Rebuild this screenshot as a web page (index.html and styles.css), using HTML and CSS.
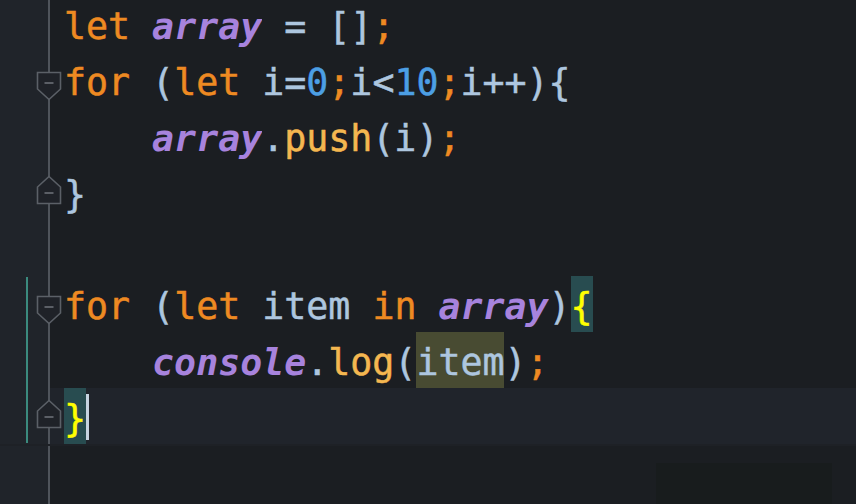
FILE: index.html
```html
<!DOCTYPE html>
<html>
<head>
<meta charset="utf-8">
<link rel="stylesheet" href="styles.css">
</head>
<body>
<div class="editor">
  <div class="lines">
    <div class="row">
      <div class="gutter"></div>
      <div class="code"><span class="kw">let</span> <span class="var">array</span> <span class="id">=</span> <span class="id">[]</span><span class="kw">;</span></div>
    </div>
    <div class="row">
      <div class="gutter"><svg class="fold" width="26" height="30" viewBox="0 0 26 30"><path d="M1.5 1.5H24.5V18L13 28.5L1.5 18Z"/><path class="minus" d="M8.5 12H17.5"/></svg></div>
      <div class="code"><span class="kw">for</span> <span class="id">(</span><span class="kw">let</span> <span class="id">i=</span><span class="num">0</span><span class="kw">;</span><span class="id">i&lt;</span><span class="num">10</span><span class="kw">;</span><span class="id">i++){</span></div>
    </div>
    <div class="row">
      <div class="gutter"></div>
      <div class="code">    <span class="var">array</span><span class="id">.</span><span class="fn">push</span><span class="id">(i)</span><span class="kw">;</span></div>
    </div>
    <div class="row">
      <div class="gutter"><svg class="fold up" width="26" height="30" viewBox="0 0 26 30"><path d="M1.5 28.5H24.5V12L13 1.5L1.5 12Z"/><path class="minus" d="M8.5 18H17.5"/></svg></div>
      <div class="code"><span class="id">}</span></div>
    </div>
    <div class="row">
      <div class="gutter"></div>
      <div class="code"></div>
    </div>
    <div class="row">
      <div class="gutter changed first"><svg class="fold" width="26" height="30" viewBox="0 0 26 30"><path d="M1.5 1.5H24.5V18L13 28.5L1.5 18Z"/><path class="minus" d="M8.5 12H17.5"/></svg></div>
      <div class="code"><span class="kw">for</span> <span class="id">(</span><span class="kw">let</span> <span class="id">item</span> <span class="kw">in</span> <span class="var">array</span><span class="id">)</span><span class="match">{</span></div>
    </div>
    <div class="row">
      <div class="gutter changed"></div>
      <div class="code">    <span class="var">console</span><span class="id">.</span><span class="fn">log</span><span class="id">(</span><span class="id occ">item</span><span class="id">)</span><span class="kw">;</span></div>
    </div>
    <div class="row current">
      <div class="gutter changed last"><svg class="fold up" width="26" height="30" viewBox="0 0 26 30"><path d="M1.5 28.5H24.5V12L13 1.5L1.5 12Z"/><path class="minus" d="M8.5 18H17.5"/></svg></div>
      <div class="code"><span class="match">}</span><span class="cursor"></span></div>
    </div>
    <div class="row filler">
      <div class="gutter"></div>
      <div class="code"></div>
    </div>
  </div>
  <div class="panel"></div>
</div>
</body>
</html>
```

FILE: styles.css
```css
html, body {
  margin: 0;
  padding: 0;
  background: #1b1e22;
  overflow: hidden;
}

.editor {
  position: relative;
  width: 856px;
  height: 504px;
  overflow: hidden;
  background: #1b1e22;
}

.lines {
  display: flex;
  flex-direction: column;
  margin-top: -4px;
}

.row {
  display: flex;
  height: 56px;
}

.row.filler {
  height: 120px;
}

.gutter {
  position: relative;
  width: 48px;
  flex: none;
  background: #20242a;
  border-right: 2px solid #4f545b;
}

.gutter.changed::before {
  content: "";
  position: absolute;
  left: 26px;
  top: 0;
  bottom: 0;
  width: 2px;
  background: #3b8a7e;
}

.gutter.first::before { top: 1px; }
.gutter.last::before { bottom: 1px; }

.fold {
  position: absolute;
  left: 36px;
  top: 19px;
  fill: #1f2228;
  stroke: #5b6067;
  stroke-width: 1.6;
  z-index: 1;
}

.fold.up {
  top: 11px;
}

.fold .minus {
  stroke: #62676e;
  stroke-width: 1.8;
}

.code {
  flex: 1;
  padding-left: 14px;
  font-family: "DejaVu Sans Mono", monospace;
  font-size: 36.6px;
  line-height: 56px;
  white-space: pre;
  color: #adc6df;
  -webkit-text-stroke: 0.5px currentColor;
}

.code span {
  display: inline-block;
  vertical-align: top;
  height: 56px;
  line-height: 61px;
  overflow: hidden;
}

.row.current .code {
  background: #20242b;
}

.row.current {
  border-bottom: 2px solid #1e2126;
}

.kw { color: #ee8a22; }
.var { color: #a783dd; font-style: italic; font-weight: bold; -webkit-text-stroke: 0; }
.id { color: #adc6df; }
.num { color: #4c9fe4; }
.fn { color: #f4b750; }

.match {
  color: #ffff00;
  background: #284c50;
}

.occ {
  background: #484b32;
}

.code .cursor {
  width: 3px;
  height: 46px;
  margin-top: 6px;
  background: #c6d3e0;
}

.panel {
  position: absolute;
  left: 656px;
  top: 463px;
  width: 176px;
  height: 60px;
  background: #181c1d;
}
```
